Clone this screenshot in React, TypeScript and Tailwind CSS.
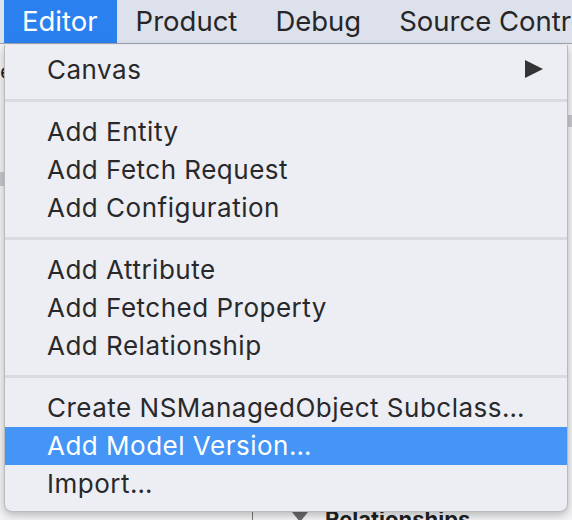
import React from "react";

const font = { fontFamily: 'Inter, "Liberation Sans", Arial, sans-serif' };

function Sep() {
  return (
    <div className="h-[24px] pt-[10px]">
      <div className="h-[3px] bg-[#d9dbe0]" />
    </div>
  );
}

function Item({ label, active, arrow }: { label: string; active?: boolean; arrow?: boolean }) {
  return (
    <div
      className={
        "h-[38px] flex items-center pl-[42px] pr-[23px] pb-[2px] text-[26px] tracking-[0.5px] " +
        (active ? "bg-[#4495f6] text-white" : "text-[#29292b]")
      }
    >
      <span className="flex-1 whitespace-nowrap">{label}</span>
      {arrow && (
        <svg width="20" height="20" viewBox="0 0 20 20">
          <path d="M1 1 L19 10 L1 19 Z" fill="#333336" />
        </svg>
      )}
    </div>
  );
}

function MenuTitle({ label, active }: { label: string; active?: boolean }) {
  return (
    <div
      className={
        "flex items-center px-[19px] whitespace-nowrap " +
        (active ? "bg-[#2a80ee] text-white pl-[18px]" : "")
      }
    >
      {label}
    </div>
  );
}

export default function App() {
  return (
    <div className="relative w-[572px] h-[520px] overflow-hidden bg-[#f3f3f5]" style={font}>
      {/* background window hints */}
      <div className="absolute left-0 top-[60px] w-[4px] h-[30px] text-[22px] text-[#222] leading-none">e</div>
      <div className="absolute left-0 top-[172px] w-[4px] h-[14px] bg-[#c9c9cc]" />
      <div className="absolute left-[252px] top-[505px] w-[1px] h-[15px] bg-[#777]" />
      <svg className="absolute left-[292px] top-[512px]" width="16" height="10" viewBox="0 0 16 10">
        <path d="M0 0 L16 0 L8 10 Z" fill="#6b6b6e" />
      </svg>
      <div className="absolute left-[325px] top-[508px] text-[22px] font-bold text-[#1f1f1f] leading-none whitespace-nowrap">
        Relationships
      </div>
      <div className="absolute right-0 top-[115px] w-[4px] h-[12px] bg-[#c8c8cc]" />

      {/* menu bar */}
      <div className="relative h-[44px] pl-[4px] bg-[#dde1ec] border-b border-[#9ea3b0] flex items-stretch text-[27.5px] text-[#262629]">
        <MenuTitle label="Editor" active />
        <MenuTitle label="Product" />
        <MenuTitle label="Debug" />
        <MenuTitle label="Source Control" />
      </div>

      {/* menu panel */}
      <div className="absolute left-[4px] top-[45px] w-[564px] pt-[6px] pb-[8px] bg-[#eceef3] rounded-b-[8px] border border-t-0 border-[#b9bbc0] shadow-[0_3px_8px_rgba(0,0,0,0.25)]">
        <Item label="Canvas" arrow />
        <Sep />
        <Item label="Add Entity" />
        <Item label="Add Fetch Request" />
        <Item label="Add Configuration" />
        <Sep />
        <Item label="Add Attribute" />
        <Item label="Add Fetched Property" />
        <Item label="Add Relationship" />
        <Sep />
        <Item label="Create NSManagedObject Subclass…" />
        <Item label="Add Model Version…" active />
        <Item label="Import…" />
      </div>
    </div>
  );
}
